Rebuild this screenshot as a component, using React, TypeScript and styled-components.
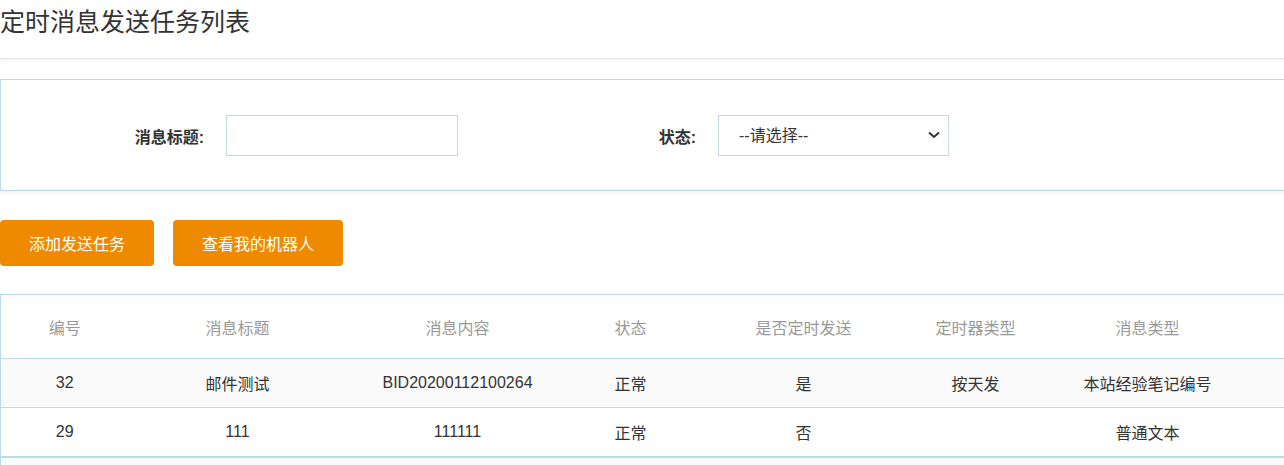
import React from 'react';
import styled, { createGlobalStyle } from 'styled-components';

const GlobalStyle = createGlobalStyle`
  body {
    margin: 0;
    overflow: hidden;
    background: #fff;
    font-family: "Liberation Sans", "Noto Sans CJK SC", sans-serif;
    color: #333;
  }
`;

const Page = styled.div`
  width: 1300px;
`;

const Header = styled.div`
  height: 59px;
  box-sizing: border-box;
  padding-top: 7px;
  border-bottom: 1px solid #e4e4e4;
  box-shadow: 0 1px 3px rgba(0, 0, 0, 0.07);
`;

const Title = styled.h1`
  margin: 0;
  font-size: 25px;
  line-height: 30px;
  font-weight: normal;
  color: #333;
`;

const FilterBox = styled.div`
  margin-top: 20px;
  height: 112px;
  box-sizing: border-box;
  border: 1px solid #b8dde5;
  box-shadow: 0 2px 3px rgba(0, 0, 0, 0.06);
  display: flex;
  align-items: center;
  padding-top: 1px;
`;

const Label = styled.label<{ $width: number }>`
  width: ${(p) => p.$width}px;
  text-align: right;
  font-size: 16px;
  font-weight: bold;
  color: #333;
  margin-right: 22px;
`;

const TextInput = styled.input`
  width: 232px;
  height: 41px;
  box-sizing: border-box;
  border: 1px solid #bcdbe3;
  outline: none;
  padding: 0 12px;
  font-size: 16px;
`;

const SelectWrap = styled.div`
  position: relative;
  width: 231px;
  height: 41px;
`;

const Select = styled.select`
  appearance: none;
  width: 100%;
  height: 100%;
  box-sizing: border-box;
  border: 1px solid #c5dadf;
  background: #fff;
  padding: 0 20px;
  font-family: inherit;
  font-size: 16px;
  color: #333;
  outline: none;
`;

const Chevron = styled.svg`
  position: absolute;
  right: 8px;
  top: 15px;
  pointer-events: none;
`;

const ButtonBar = styled.div`
  margin-top: 29px;
  display: flex;
  gap: 19px;
`;

const OrangeButton = styled.button`
  height: 46px;
  padding: 0 29px;
  border: none;
  border-radius: 4px;
  background: #ef8a00;
  color: #fff;
  font-family: inherit;
  font-size: 16px;
  cursor: pointer;
`;

const Table = styled.table`
  margin-top: 28px;
  width: 1300px;
  border-collapse: collapse;
  table-layout: fixed;
  border-top: 1px solid #b8dde5;
  border-left: 1px solid #b8dde5;
`;

const Th = styled.th`
  height: 63px;
  font-size: 16px;
  font-weight: normal;
  color: #999;
  text-align: center;
  padding: 0;
`;

const Row = styled.tr<{ $striped: boolean }>`
  background: ${(p) => (p.$striped ? '#fafafa' : '#fff')};
  border-top: 1px solid #b8dde5;
  &:last-child {
    border-top: 2px solid #b8dde5;
  }
`;

const Td = styled.td`
  height: 48px;
  font-size: 16px;
  color: #333;
  text-align: center;
  padding: 0;
`;

const columns = [
  { title: '编号', width: 128 },
  { title: '消息标题', width: 218 },
  { title: '消息内容', width: 222 },
  { title: '状态', width: 124 },
  { title: '是否定时发送', width: 222 },
  { title: '定时器类型', width: 122 },
  { title: '消息类型', width: 222 },
  { title: '', width: 42 },
];

const rows = [
  ['32', '邮件测试', 'BID20200112100264', '正常', '是', '按天发', '本站经验笔记编号', ''],
  ['29', '111', '111111', '正常', '否', '', '普通文本', ''],
  ['', '', '', '', '', '', '', ''],
];

export default function App() {
  return (
    <Page>
      <GlobalStyle />
      <Header>
        <Title>定时消息发送任务列表</Title>
      </Header>

      <FilterBox>
        <Label $width={203}>消息标题:</Label>
        <TextInput />
        <Label $width={238}>状态:</Label>
        <SelectWrap>
          <Select defaultValue="">
            <option value="">--请选择--</option>
            <option value="1">正常</option>
            <option value="0">停用</option>
          </Select>
          <Chevron width="14" height="10" viewBox="0 0 14 10">
            <path d="M2 2.5 L7 7 L12 2.5" fill="none" stroke="#333" strokeWidth="2" />
          </Chevron>
        </SelectWrap>
      </FilterBox>

      <ButtonBar>
        <OrangeButton>添加发送任务</OrangeButton>
        <OrangeButton>查看我的机器人</OrangeButton>
      </ButtonBar>

      <Table>
        <colgroup>
          {columns.map((c, i) => (
            <col key={i} style={{ width: c.width }} />
          ))}
        </colgroup>
        <thead>
          <tr>
            {columns.map((c, i) => (
              <Th key={i}>{c.title}</Th>
            ))}
          </tr>
        </thead>
        <tbody>
          {rows.map((r, i) => (
            <Row key={i} $striped={i % 2 === 0}>
              {r.map((v, j) => (
                <Td key={j}>{v}</Td>
              ))}
            </Row>
          ))}
        </tbody>
      </Table>
    </Page>
  );
}
